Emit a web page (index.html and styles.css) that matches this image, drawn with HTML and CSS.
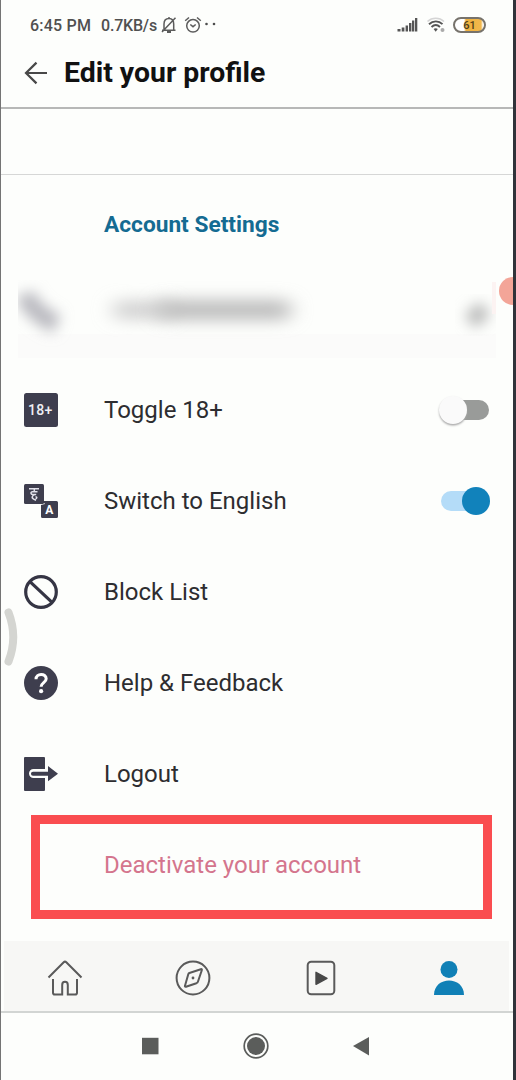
FILE: index.html
```html
<!DOCTYPE html>
<html lang="en">
<head>
<meta charset="utf-8">
<meta name="viewport" content="width=device-width">
<title>Edit your profile</title>
<link rel="stylesheet" href="styles.css">
</head>
<body>
<div class="phone">
  <div class="status">
    <span class="time">6:45 PM</span>
    <span class="speed">0.7KB/s</span>
    <svg class="bell" width="16" height="18" viewBox="0 0 16 18" fill="none" stroke="#5c5c5c" stroke-width="1.5"><path d="M1 14.2h13.5M3 13.5V8c0-3.500 2-5.500 5-5.500s4.700 2 4.700 5.500v6M8 2.500V1M1 16 14.500 1.800"/><path d="M6 16h4" stroke-width="2"/></svg>
    <svg class="alarm" width="18" height="18" viewBox="0 0 18 18" fill="none" stroke="#5c5c5c" stroke-width="1.500"><circle cx="9" cy="9.800" r="6.300"/><path d="M1.200 4.800 5 1.500M16.800 4.800 13 1.500M6.300 8.500 9 10.700 11.700 8.500"/></svg>
    <svg class="dots" width="14" height="18" viewBox="0 0 14 18" fill="#4c4c4c"><circle cx="2.500" cy="8" r="1.300"/><circle cx="10" cy="8" r="1.300"/></svg>
    <div class="signals">
      <svg width="21" height="16" viewBox="0 0 21 16" fill="#555"><path d="M.5 12h3v2.500h-3zM4.700 10.500h2.700v4H4.700zM8.600 8.500h2.400v6H8.600zM12 6h2.400v8.500H12zM15 3.500h2.300v11H15zM18 1h2.300v13.500H18z"/></svg>
      <svg width="20" height="18" viewBox="0 0 20 18" fill="none"><path d="M1.500 5.500C6 1.200 13.500 1.200 18 5.500" stroke="#d5d5d5" stroke-width="1.600"/><path d="M3 8.200c4-3.800 9.800-3.800 13.500 0M5.500 11c2.600-2.400 6-2.400 8.500 0" stroke="#555" stroke-width="1.900"/><path d="M7.600 13c1.200-1 3-1 4.200 0l-2.100 2.800z" fill="#555"/><circle cx="16.500" cy="14" r="2" fill="#aaa"/></svg>
      <div class="battery"><span>61</span></div>
    </div>
  </div>

  <header class="header">
    <svg width="24" height="24" viewBox="0 0 24 24" fill="none" stroke="#484848" stroke-width="2.200"><path d="M23 12H2M12.500 1.600 2 12l10.500 10.400"/></svg>
    <h1>Edit your profile</h1>
  </header>
  <div class="blank"></div>

  <main class="settings">
    <h2>Account Settings</h2>
    <div class="row redacted">
      <svg width="478" height="78" viewBox="0 0 478 78">
        <defs>
          <filter id="soft" x="-50%" y="-100%" width="200%" height="300%"><feGaussianBlur stdDeviation="10 8"/></filter>
          <filter id="soft-icon" x="-100%" y="-100%" width="300%" height="300%"><feGaussianBlur stdDeviation="7"/></filter>
        </defs>
        <path d="M0 54h478v24H0z" fill="#fbfbfa"/>
        <path d="M7 14c5 14 16 23 32 30" fill="none" stroke="#b9b9bf" stroke-width="19" filter="url(#soft-icon)"/>
        <rect x="95" y="21" width="60" height="18" rx="8" fill="#d0d0d0" filter="url(#soft)"/>
        <rect x="140" y="20" width="133" height="20" rx="8" fill="#bcbcbc" filter="url(#soft)"/>
        <path d="M452 42 467 28" stroke="#b9bab9" stroke-width="17" filter="url(#soft-icon)"/>
        <path d="M474 2h4v32h-4z" fill="#fcf3f2"/>
      </svg>
    </div>
    <div class="row">
      <svg class="icon" viewBox="0 0 34 34"><rect width="34" height="34" rx="2.500" fill="#3e3e4e"/><text class="badge-text" x="4" y="21.800">18+</text></svg>
      <span>Toggle 18+</span>
      <div class="switch"></div>
    </div>
    <div class="row">
      <svg class="icon" viewBox="0 0 34 34"><rect width="20" height="20" rx="1.500" fill="#3e3e4e"/><path d="M5 4.800h10M10.300 4.800v2.700M13.500 7.800H8.500c-2.200 0-2 2.700.3 2.700h3.400c-3.900-.2-5.200 3.300-2.500 4.600l2.300 1.200M11.500 12.800c1.800 0 1.600 2 0 2" fill="none" stroke="#e2e2eb" stroke-width="1.500"/><path d="M18.500 17H32.500a1.500 1.500 0 0 1 1.500 1.500V32.500a1.500 1.500 0 0 1-1.500 1.500H18.500A1.500 1.500 0 0 1 17 32.500V21l4-1z" fill="#3e3e4e"/><text class="letter" x="25.300" y="30.300" text-anchor="middle">A</text></svg>
      <span>Switch to English</span>
      <div class="switch on"></div>
    </div>
    <div class="row">
      <svg class="icon" viewBox="0 0 34 34" fill="none" stroke="#353544" stroke-width="3.200"><circle cx="17" cy="17" r="15.300"/><path d="M6.200 6.800 27.800 27.200"/></svg>
      <span>Block List</span>
    </div>
    <div class="row">
      <svg class="icon" viewBox="0 0 34 34"><circle cx="17" cy="17" r="17" fill="#3e3e4e"/><path d="M12 13.200c0-6.300 10.200-6.300 10.200-.5 0 3.900-5.100 4-5.100 8.100" fill="none" stroke="#fff" stroke-width="3"/><circle cx="17.100" cy="25.200" r="2.100" fill="#fff"/></svg>
      <span>Help &amp; Feedback</span>
    </div>
    <div class="row">
      <svg class="icon" viewBox="0 0 34 34"><path d="M1 0h19a1 1 0 0 1 1 1v11H9.500a4.500 4.500 0 0 0 0 9H21v12a1 1 0 0 1-1 1H1a1 1 0 0 1-1-1V1a1 1 0 0 1 1-1z" fill="#3e3e4e"/><path d="M9 14.700h15V8.900L34 16.700l-10 7.500v-5.400H9a2 2 0 0 1 0-4.100z" fill="#3e3e4e"/></svg>
      <span>Logout</span>
    </div>
    <div class="row deactivate"><span>Deactivate your account</span></div>
  </main>

  <nav class="tabs">
    <svg width="36" height="36" viewBox="0 0 36 36" fill="none" stroke="#5a5a5a" stroke-width="2"><path d="M1.500 17.500 16.700 2.300q1.300-1.300 2.600 0l15.200 15.200M6 19v13.700q0 1.800 1.800 1.800h7.400V25q0-3.200 2.800-3.200T20.800 25v9.500h7.400q1.800 0 1.800-1.800V19"/></svg>
    <svg width="36" height="36" viewBox="0 0 36 36" fill="none" stroke="#5a5a5a" stroke-width="2"><circle cx="18" cy="18" r="16.400"/><path d="m14.400 13 11.400-3.800q1.400-.4 1 1L23 21.500q-.4 1.200-1.600 1.700L11 26.700q-1.500.4-1-1l3.200-11.200q.3-1.100 1.200-1.500z"/><circle cx="18" cy="18" r="1.400" fill="#5a5a5a" stroke="none"/></svg>
    <svg width="36" height="36" viewBox="0 0 36 36" fill="none" stroke="#5a5a5a" stroke-width="2"><rect x="4.700" y="1.700" width="26.600" height="32.600" rx="3.500"/><path d="M13 12.300v12L24 18.300z" fill="#484848" stroke="#484848" stroke-width="1.400" stroke-linejoin="round"/></svg>
    <svg width="36" height="36" viewBox="0 0 36 36" fill="#1080b6"><circle cx="18" cy="9.500" r="8.500"/><path d="M3 35C3 15.700 33 15.700 33 35z"/></svg>
  </nav>
  <div class="system">
    <svg width="28" height="28" viewBox="0 0 28 28" fill="#5b5d5b"><path d="M6 5.800h16.500v16.500H6z"/></svg>
    <svg width="28" height="28" viewBox="0 0 28 28"><circle cx="14" cy="14" r="11.800" fill="none" stroke="#5b5d5b" stroke-width="1.700"/><circle cx="14" cy="14" r="9" fill="#5b5d5b"/></svg>
    <svg width="28" height="28" viewBox="0 0 28 28" fill="#5b5d5b"><path d="M5 14 21 5v18.500z"/></svg>
  </div>

  <div class="highlight"></div>
  <svg class="edge-handle" width="14" height="58" viewBox="0 0 14 58" fill="none"><path d="M4.500 4.500Q14 29 4.500 53.500" stroke="#d4d5d1" stroke-width="8" stroke-linecap="round"/></svg>
  <div class="touch"></div>
</div>
</body>
</html>
```
FILE: styles.css
```css
* { box-sizing: border-box; }
body { margin: 0; font-family: Roboto, sans-serif; }
.phone {
  position: relative;
  display: flex;
  flex-direction: column;
  width: 516px;
  height: 1080px;
  overflow: hidden;
  background: #fdfefc;
  border-left: 1px solid #747474;
  border-right: 3px solid #30333a;
}
svg { display: block; flex: none; }
.status {
  display: flex;
  align-items: center;
  height: 50px;
  padding: 0 27px 0 29px;
  color: #505050;
  font-size: 16px;
  font-weight: 500;
  white-space: nowrap;
}
.time { width: 71px; letter-spacing: .2px; }
.speed { width: 60px; letter-spacing: -.2px; }
.alarm { margin-left: 7px; }
.dots { margin-left: 2px; }
.signals { display: flex; align-items: center; gap: 8px; margin-left: auto; }
.battery {
  width: 33px;
  height: 16px;
  margin-left: -1px;
  border: 2px solid #77736c;
  border-radius: 8px;
  background: linear-gradient(90deg, #fff 9px, #efb03c 11px, #f2b84d 26px, #fff 28px);
  color: #4f3c18;
  font-size: 11px;
  line-height: 13px;
  text-align: center;
}
.header {
  display: flex;
  align-items: center;
  gap: 16px;
  height: 59px;
  padding: 0 23px 11px;
  border-bottom: 2px solid #b7b8b7;
}
h1, h2 { margin: 0; white-space: nowrap; }
h1 { color: #111; font-size: 28.4px; font-weight: 700; line-height: 32px; }
.blank { height: 66px; border-bottom: 1px solid #d6d7d6; }
.settings { display: flex; flex-direction: column; height: 766px; }
h2 {
  height: 98px;
  padding-left: 103px;
  color: #146b92;
  font-size: 22.700px;
  font-weight: 700;
  line-height: 99px;
}
.row {
  display: flex;
  align-items: center;
  height: 91px;
  flex: none;
  padding: 0 24px 0 23px;
  color: #2d2d30;
  font-size: 24px;
  white-space: nowrap;
}
.redacted { padding-left: 17px; }
.icon { width: 34px; height: 34px; margin-right: 46px; }
.badge-text { fill: #eeeef4; font: 500 14px Roboto, sans-serif; letter-spacing: .3px; }
.letter { fill: #fff; font: 700 12px Roboto, sans-serif; letter-spacing: 0; }
.switch {
  position: relative;
  width: 48px;
  height: 20px;
  margin-left: auto;
  border-radius: 10px;
  background: linear-gradient(90deg, transparent 18px, #999b99 18px);
}
.switch::after {
  content: "";
  position: absolute;
  left: -2px;
  top: -4px;
  width: 28px;
  height: 28px;
  border-radius: 50%;
  background: #fafafa;
  box-shadow: 0 1.500px 2px #aaa;
}
.switch.on { background: #b4dcf8; }
.switch.on::after { left: 21px; background: #1182bb; box-shadow: none; }
.deactivate { padding-left: 103px; color: #d4758d; }
.tabs {
  display: flex;
  justify-content: space-between;
  align-items: center;
  height: 72px;
  padding: 4px 46px 0;
  background: linear-gradient(90deg, transparent 3px, #f7f7f5 3px, #f7f7f5 508px, transparent 508px);
  border-bottom: 2px solid #d2d5d3;
}
.system {
  display: flex;
  justify-content: space-between;
  align-items: center;
  height: 67px;
  padding: 0 137px 2px 135px;
}
.highlight {
  position: absolute;
  left: 30px;
  top: 815px;
  width: 461px;
  height: 104px;
  border: 9px solid #fa4d50;
}
.edge-handle { position: absolute; left: 3px; top: 608px; }
.touch {
  position: absolute;
  right: -14px;
  top: 277px;
  width: 28px;
  height: 28px;
  border-radius: 50%;
  background: #f3a598;
}
```
